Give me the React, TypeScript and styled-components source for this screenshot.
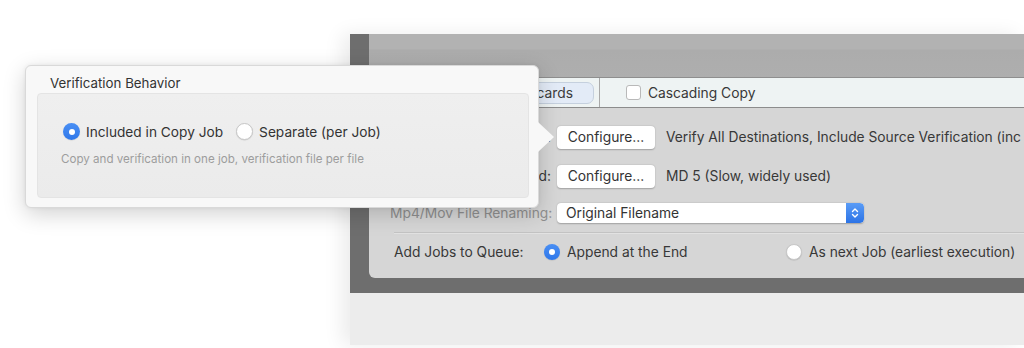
import React from "react"
import styled, { createGlobalStyle } from "styled-components"

const GlobalStyle = createGlobalStyle`
  html, body {
    margin: 0;
    padding: 0;
    background: #ffffff;
  }
  body {
    font-family: Inter, "Noto Sans", "Liberation Sans", sans-serif;
    color: #383838;
    -webkit-font-smoothing: antialiased;
  }
`

const ChevronStepper = () => (
  <svg width="8" height="12" viewBox="0 0 8 12" fill="none">
    <path d="M1.5 4.5 L4 2 L6.5 4.5" stroke="#fff" strokeWidth="1.4" strokeLinecap="round" strokeLinejoin="round" />
    <path d="M1.5 7.5 L4 10 L6.5 7.5" stroke="#fff" strokeWidth="1.4" strokeLinecap="round" strokeLinejoin="round" />
  </svg>
)

export default function App() {
  return (
    <>
      <GlobalStyle />
      <Styled.Page>
        <Styled.Window>
          <Styled.Frame>
            <Styled.Panel>
              <Styled.TopBar />
              <Styled.Toolbar>
                <Styled.Pill>Eject memory cards</Styled.Pill>
                <Styled.ToolDivider />
                <Styled.CheckItem>
                  <Styled.Checkbox />
                  Cascading Copy
                </Styled.CheckItem>
              </Styled.Toolbar>
              <Styled.Form>
                <Styled.Row $h={26}>
                  <Styled.Label>Verification:</Styled.Label>
                  <Styled.Button>Configure…</Styled.Button>
                  <Styled.Value>Verify All Destinations, Include Source Verification (inc</Styled.Value>
                </Styled.Row>
                <Styled.Row $h={26}>
                  <Styled.Label>Verification Method:</Styled.Label>
                  <Styled.Button>Configure…</Styled.Button>
                  <Styled.Value>MD 5 (Slow, widely used)</Styled.Value>
                </Styled.Row>
                <Styled.Row $h={22}>
                  <Styled.Label $muted>Mp4/Mov File Renaming:</Styled.Label>
                  <Styled.Select>
                    <span>Original Filename</span>
                    <Styled.Stepper>
                      <ChevronStepper />
                    </Styled.Stepper>
                  </Styled.Select>
                </Styled.Row>
                <Styled.Separator />
                <Styled.QueueRow>
                  <Styled.QueueLabel>Add Jobs to Queue:</Styled.QueueLabel>
                  <Styled.Option $w={242}>
                    <Styled.Radio $checked />
                    Append at the End
                  </Styled.Option>
                  <Styled.Option>
                    <Styled.Radio />
                    As next Job (earliest execution)
                  </Styled.Option>
                </Styled.QueueRow>
              </Styled.Form>
            </Styled.Panel>
          </Styled.Frame>
          <Styled.Footer />
        </Styled.Window>

        <Styled.Popover>
          <Styled.PopTitle>Verification Behavior</Styled.PopTitle>
          <Styled.PopBox>
            <Styled.PopOptions>
              <Styled.PopOption>
                <Styled.Radio $checked $size={17} />
                Included in Copy Job
              </Styled.PopOption>
              <Styled.PopOption>
                <Styled.Radio $size={17} />
                Separate (per Job)
              </Styled.PopOption>
            </Styled.PopOptions>
            <Styled.PopHint>Copy and verification in one job, verification file per file</Styled.PopHint>
          </Styled.PopBox>
        </Styled.Popover>
      </Styled.Page>
    </>
  )
}

const Styled = {
  Page: styled.div`
    position: relative;
    width: 1024px;
    height: 348px;
    overflow: hidden;
    background: #ffffff;
    padding: 34px 0 0 350px;
    box-sizing: border-box;
  `,
  Window: styled.div`
    width: 674px;
    height: 311px;
    display: flex;
    flex-direction: column;
    box-shadow: -8px 0 18px rgba(0, 0, 0, 0.08);
  `,
  Frame: styled.div`
    background: #6e6e6e;
    padding: 0 0 15px 19px;
  `,
  Panel: styled.div`
    display: flex;
    flex-direction: column;
    background: #d6d6d6;
    border-bottom-left-radius: 6px;
  `,
  TopBar: styled.div`
    height: 43px;
    background: linear-gradient(#b2b2b2 0, #b2b2b2 15px, #acacac 16px, #aeaeae 100%);
    border-bottom: 1px solid #8e8e8e;
  `,
  Toolbar: styled.div`
    height: 29px;
    display: flex;
    align-items: center;
    background: #eef3f3;
    border-bottom: 1px solid #8c8c8c;
    font-size: 13.8px;
  `,
  Pill: styled.div`
    margin-left: 63px;
    height: 20px;
    display: flex;
    align-items: center;
    padding: 0 20px 0 10px;
    background: #e3ebf7;
    border: 1px solid #c5d0de;
    border-radius: 7px;
    color: #3c3c3c;
    white-space: nowrap;
  `,
  ToolDivider: styled.div`
    width: 1px;
    align-self: stretch;
    background: #a9a9a9;
    margin-left: 5px;
  `,
  CheckItem: styled.label`
    display: flex;
    align-items: center;
    gap: 7px;
    margin-left: 26px;
    color: #383838;
  `,
  Checkbox: styled.span`
    width: 13px;
    height: 13px;
    border: 1px solid #b9b9b9;
    border-radius: 3px;
    background: #ffffff;
  `,
  Form: styled.div`
    display: flex;
    flex-direction: column;
    padding: 16px 0 16px 21px;
    gap: 13px;
    font-size: 13.8px;
  `,
  Row: styled.div<{ $h: number }>`
    height: ${(p) => p.$h}px;
    display: flex;
    align-items: center;
    gap: 6px;
    white-space: nowrap;
  `,
  Label: styled.div<{ $muted?: boolean }>`
    width: 161px;
    flex: none;
    text-align: right;
    color: ${(p) => (p.$muted ? "#8f8f8f" : "#383838")};
  `,
  Button: styled.div`
    width: 98px;
    height: 23px;
    flex: none;
    display: flex;
    align-items: center;
    justify-content: center;
    background: #ffffff;
    border-radius: 4px;
    box-shadow: 0 0.5px 1.5px rgba(0, 0, 0, 0.25);
    color: #333333;
  `,
  Value: styled.div`
    margin-left: 5px;
    color: #383838;
  `,
  Select: styled.div`
    width: 307px;
    height: 20px;
    flex: none;
    display: flex;
    align-items: center;
    justify-content: space-between;
    background: #ffffff;
    border-radius: 4px;
    box-shadow: 0 0.5px 1.5px rgba(0, 0, 0, 0.25);
    padding-left: 9px;
    box-sizing: border-box;
    color: #333333;
    overflow: hidden;
  `,
  Stepper: styled.div`
    width: 18px;
    height: 20px;
    display: flex;
    align-items: center;
    justify-content: center;
    background: linear-gradient(#5a9cf6, #2c73e6);
    border-radius: 0 4px 4px 0;
  `,
  Separator: styled.div`
    height: 1px;
    margin: -5px 0 -4px 4px;
    background: #c3c3c3;
    box-shadow: 0 1px 0 #e2e2e2;
  `,
  QueueRow: styled.div`
    height: 20px;
    display: flex;
    align-items: center;
    padding-left: 4px;
    white-space: nowrap;
  `,
  QueueLabel: styled.div`
    width: 150px;
    flex: none;
    color: #383838;
  `,
  Option: styled.div<{ $w?: number }>`
    display: flex;
    align-items: center;
    gap: 7px;
    width: ${(p) => (p.$w ? `${p.$w}px` : "auto")};
    flex: none;
    color: #383838;
  `,
  Radio: styled.span<{ $checked?: boolean; $size?: number }>`
    width: ${(p) => p.$size ?? 16}px;
    height: ${(p) => p.$size ?? 16}px;
    flex: none;
    border-radius: 50%;
    box-sizing: border-box;
    display: flex;
    align-items: center;
    justify-content: center;
    background: ${(p) => (p.$checked ? "linear-gradient(#4a8ff4, #2f78ea)" : "#ffffff")};
    border: ${(p) => (p.$checked ? "none" : "1px solid #c8c8c8")};
    box-shadow: 0 0.5px 1px rgba(0, 0, 0, 0.15);
    &::after {
      content: "";
      display: ${(p) => (p.$checked ? "block" : "none")};
      width: 6px;
      height: 6px;
      border-radius: 50%;
      background: #ffffff;
    }
  `,
  Popover: styled.div`
    position: absolute;
    left: 25px;
    top: 65px;
    width: 514px;
    height: 143px;
    box-sizing: border-box;
    padding: 8px 9px 9px 11px;
    display: flex;
    flex-direction: column;
    background: #f8f8f8;
    border: 1px solid #d9d9d9;
    border-radius: 6px;
    box-shadow: 0 6px 22px rgba(0, 0, 0, 0.18), 0 0 4px rgba(0, 0, 0, 0.06);
    &::after {
      content: "";
      position: absolute;
      right: -16px;
      top: 56px;
      width: 16px;
      height: 30px;
      background: #f8f8f8;
      clip-path: polygon(0 0, 100% 50%, 0 100%);
    }
  `,
  PopTitle: styled.div`
    font-size: 13.3px;
    color: #333333;
    padding-left: 13px;
    height: 19px;
    line-height: 19px;
  `,
  PopBox: styled.div`
    flex: 1;
    display: flex;
    flex-direction: column;
    padding: 29px 0 0 25px;
    background: linear-gradient(#efefef, #ebebeb);
    border: 1px solid #e4e4e4;
    border-radius: 4px;
  `,
  PopOptions: styled.div`
    display: flex;
    align-items: center;
    gap: 13px;
    font-size: 13.7px;
    color: #333333;
  `,
  PopOption: styled.div`
    display: flex;
    align-items: center;
    gap: 6px;
  `,
  PopHint: styled.div`
    margin-top: 12px;
    margin-left: -2px;
    font-size: 11.6px;
    color: #9d9d9d;
  `,
  Footer: styled.div`
    flex: 1;
    background: #ececec;
  `,
}
